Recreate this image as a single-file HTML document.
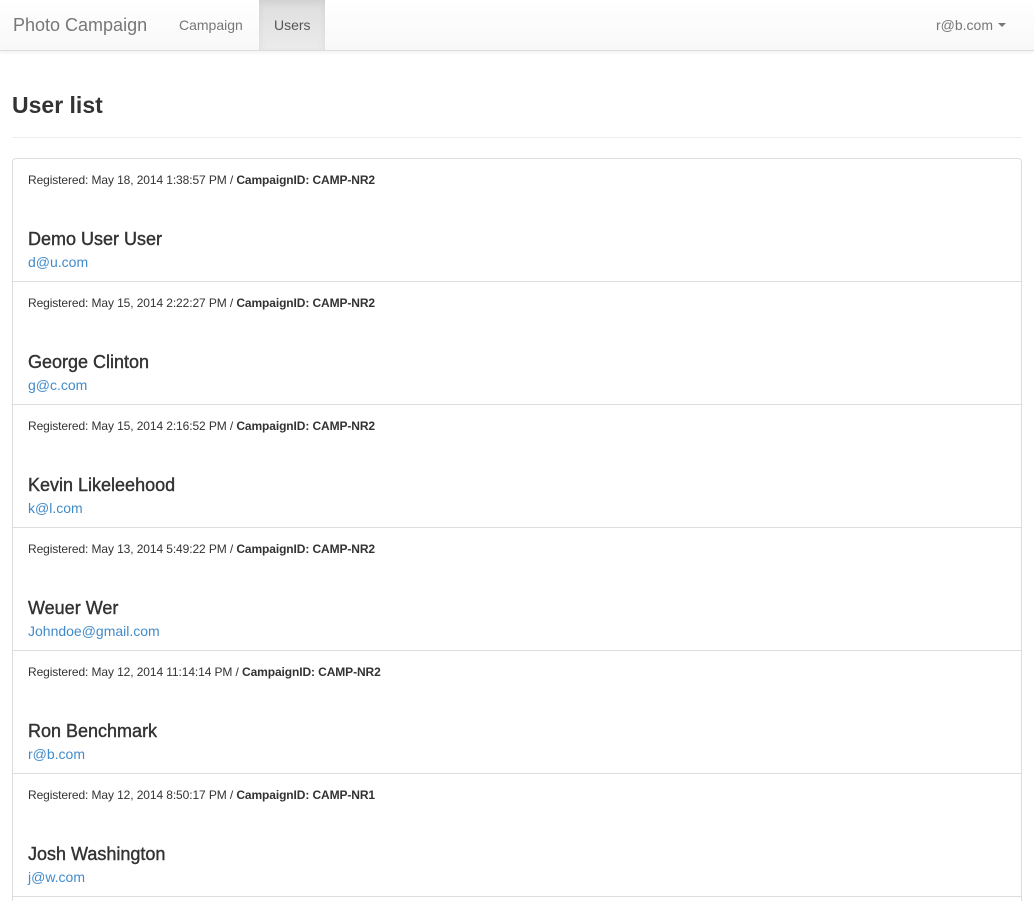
<!DOCTYPE html>
<html><head><style>
html,body{margin:0;height:901px;overflow:hidden}
body{font-family:"Liberation Sans",Arial,sans-serif;color:#333;background:#fff;width:1034px;position:relative}
.nav{position:absolute;left:0;top:0;width:1034px;height:50px;background:linear-gradient(#fff,#f8f8f8);border-bottom:1px solid #ddd;box-shadow:0 1px 4px rgba(0,0,0,.08)}
.brand{position:absolute;left:13px;top:15px;font-size:18px;color:#777}
.l1{position:absolute;left:179px;top:17px;font-size:14px;color:#777}
.act{position:absolute;left:259px;top:0;width:66px;height:50px;background:linear-gradient(#dedede,#ebebeb);box-shadow:inset 0 3px 8px rgba(0,0,0,.07)}
.act span{position:absolute;left:15px;top:17px;font-size:14px;color:#555}
.user{position:absolute;left:936px;top:17px;font-size:14px;color:#777}
.caret{position:absolute;left:998px;top:23px;border-left:4px solid transparent;border-right:4px solid transparent;border-top:4px solid #777;width:0;height:0}
h1{position:absolute;left:12px;top:91px;margin:0;font-size:23px;font-weight:bold;line-height:28px}
.hr{position:absolute;left:12px;top:137px;width:1010px;height:1px;background:#eee}
.panel{position:absolute;left:12px;top:158px;width:1008px;height:760px;border:1px solid #ddd;border-radius:4px}
.item{position:absolute;left:0;width:1008px;height:122px;border-bottom:1px solid #ddd}
.reg{position:absolute;left:15px;top:13px;font-size:12px;line-height:16px;letter-spacing:-.1px}
.nm{position:absolute;left:15px;top:69px;font-size:18px;line-height:22px;-webkit-text-stroke:.4px #333}
.em{position:absolute;left:15px;top:94px;font-size:14px;line-height:18px;color:#428bca}
</style></head><body>
<div class="nav"><div class="brand">Photo Campaign</div><div class="l1">Campaign</div><div class="act"><span>Users</span></div><div class="user">r@b.com</div><div class="caret"></div></div>
<h1>User list</h1><div class="hr"></div>
<div class="panel">
<div class="item" style="top:0"><div class="reg">Registered: May 18, 2014 1:38:57 PM / <b>CampaignID: CAMP-NR2</b></div><div class="nm">Demo User User</div><div class="em">d@u.com</div></div>
<div class="item" style="top:123px"><div class="reg">Registered: May 15, 2014 2:22:27 PM / <b>CampaignID: CAMP-NR2</b></div><div class="nm">George Clinton</div><div class="em">g@c.com</div></div>
<div class="item" style="top:246px"><div class="reg">Registered: May 15, 2014 2:16:52 PM / <b>CampaignID: CAMP-NR2</b></div><div class="nm">Kevin Likeleehood</div><div class="em">k@l.com</div></div>
<div class="item" style="top:369px"><div class="reg">Registered: May 13, 2014 5:49:22 PM / <b>CampaignID: CAMP-NR2</b></div><div class="nm">Weuer Wer</div><div class="em">Johndoe@gmail.com</div></div>
<div class="item" style="top:492px"><div class="reg">Registered: May 12, 2014 11:14:14 PM / <b>CampaignID: CAMP-NR2</b></div><div class="nm">Ron Benchmark</div><div class="em">r@b.com</div></div>
<div class="item" style="top:615px"><div class="reg">Registered: May 12, 2014 8:50:17 PM / <b>CampaignID: CAMP-NR1</b></div><div class="nm">Josh Washington</div><div class="em">j@w.com</div></div>
</div>
</body></html>
